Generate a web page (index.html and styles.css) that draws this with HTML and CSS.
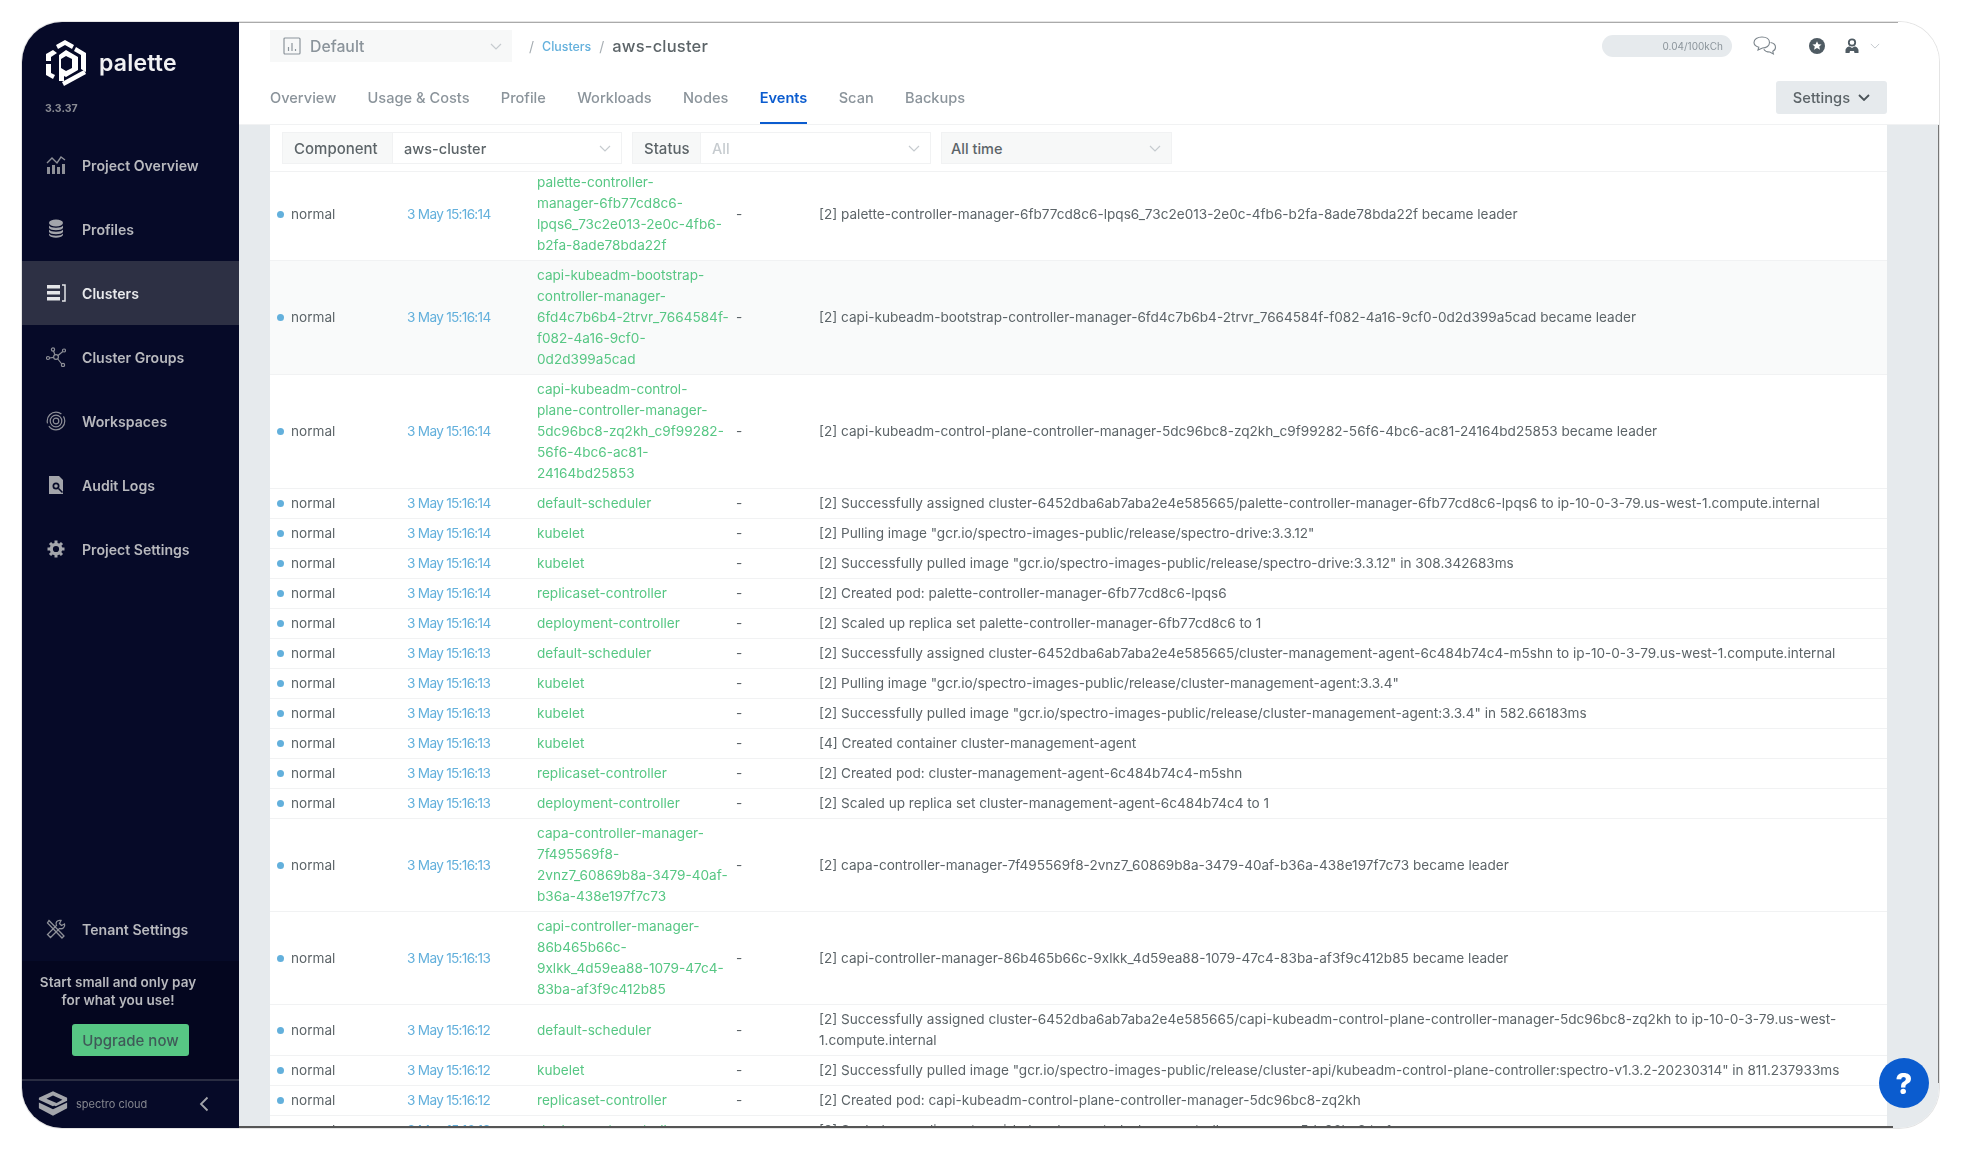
FILE: index.html
```html
<!DOCTYPE html>
<html lang="en">
<head>
<meta charset="utf-8">
<title>aws-cluster events</title>
<link rel="stylesheet" href="styles.css">
</head>
<body>
<div class="window">
  <aside class="sidebar">
    <div class="brand">
      <svg class="brand-mark" viewBox="0 0 42 48" fill="#fff"><path d="M20 1l9 5-2 4-7-4-7 4-2-4z"/><path d="M8 11l4 3-6 4v4H1v-7z"/><path d="M1 25h5v9l4 2-2 4-7-4z"/><path d="M31 8l10 6v19l-5-3V16l-7-4z"/><path d="M41 36l-22 12-2-4 22-12z" transform="translate(0 -1)"/><path fill-rule="evenodd" d="M21 11l12 7v13l-12 7-2-1v5h-5V16zm0 6l-5 3v9l5 3 6-3v-9z"/></svg>
      <span class="brand-name">palette</span>
    </div>
    <div class="version">3.3.37</div>
    <nav class="nav">
      <a class="nav-item"><svg class="nav-icon" viewBox="0 0 20 20" fill="#8e9098"><rect x="1" y="12" width="3" height="7"/><rect x="6" y="10" width="3" height="9"/><rect x="11" y="12" width="3" height="7"/><rect x="16" y="9" width="3" height="10"/><path d="M1 8l5-5 5 5 4-6 4 3" fill="none" stroke="#8e9098" stroke-width="1.4"/></svg>Project Overview</a>
      <a class="nav-item"><svg class="nav-icon" viewBox="0 0 20 20" fill="#a3a5ab"><ellipse cx="10" cy="4" rx="7" ry="3.4"/><path d="M3 6.500c1.500 3 12.500 3 14 0V9c-1.500 3-12.500 3-14 0z"/><path d="M3 10.500c1.500 3 12.500 3 14 0V13c-1.500 3-12.500 3-14 0z"/><path d="M3 14.500c1.500 3 12.500 3 14 0V16c-1.500 3.500-12.500 3.500-14 0z"/></svg>Profiles</a>
      <a class="nav-item active"><svg class="nav-icon" viewBox="0 0 20 20" fill="#e4e5e8"><rect x="1" y="2" width="13" height="3.500"/><rect x="1" y="8" width="13" height="3.500"/><rect x="1" y="14" width="13" height="3.500"/><path d="M16 2h3v16h-3" fill="none" stroke="#e4e5e8" stroke-width="1.500"/></svg>Clusters</a>
      <a class="nav-item"><svg class="nav-icon" viewBox="0 0 20 20" fill="none" stroke="#8e9098" stroke-width="1.200"><circle cx="10" cy="10" r="2.400"/><circle cx="7" cy="2.500" r="1.600"/><circle cx="18" cy="3.500" r="1.500"/><circle cx="2" cy="11" r="1.500"/><circle cx="17" cy="18" r="1.600"/><path d="M7.500 4l1.500 4M16.800 4.500L12 8.500M3.500 11l4-.6M15.800 17l-4-5"/></svg>Cluster Groups</a>
      <a class="nav-item"><svg class="nav-icon" viewBox="0 0 20 20" fill="none" stroke="#8e9098" stroke-width="1.200"><circle cx="10" cy="10" r="8.800" stroke-dasharray="22 3"/><circle cx="10" cy="10" r="5.800"/><circle cx="10" cy="10" r="2.800"/></svg>Workspaces</a>
      <a class="nav-item"><svg class="nav-icon" viewBox="0 0 20 20"><path fill="#a3a5ab" d="M3 1h10l4 4v14H3z"/><circle cx="10" cy="11" r="3.500" fill="#060a28"/><circle cx="10" cy="11" r="1.800" fill="#a3a5ab"/><path d="M12.500 13.500l4 4" stroke="#060a28" stroke-width="1.600"/></svg>Audit Logs</a>
      <a class="nav-item"><svg class="nav-icon" viewBox="0 0 20 20"><circle cx="10" cy="10" r="4.700" fill="none" stroke="#a3a5ab" stroke-width="3.200"/><path d="M10 1.500v17M1.500 10h17M4 4l12 12M16 4L4 16" stroke="#a3a5ab" stroke-width="3" stroke-dasharray="3 11"/></svg>Project Settings</a>
    </nav>
    <a class="nav-item"><svg class="nav-icon" viewBox="0 0 20 20" fill="none" stroke="#8e9098" stroke-width="1.300"><path d="M3 1.500l15 15.500-2 2L1.500 4z"/><path d="M18.500 5l-3 1.500-2-2L15 1.500C11 .5 9 4 10.500 6.500L1.500 15.500l3 3 9-9c3 1 6-1.500 5-4.500z"/></svg>Tenant Settings</a>
    <div class="upsell">
      <p class="upsell-text">Start small and only pay<br>for what you use!</p>
      <button class="upgrade">Upgrade now</button>
    </div>
    <div class="side-foot">
      <svg class="spectro-mark" viewBox="0 0 34 28" fill="#a3a5ab"><path d="M17 1l15 7v3L20 17l-3-1.500L27 10 17 5.500 10 9l12 5-5 3L2 10V8z"/><path d="M2 13l15 7 15-7v6L17 27 2 19z"/></svg>
      <span class="spectro-name">spectro cloud</span>
      <svg class="collapse" viewBox="0 0 10 16" fill="none" stroke="#a3a5ab" stroke-width="1.800"><path d="M8.500 1.500L2 8l6.500 6.500"/></svg>
    </div>
  </aside>
  <main class="main">
    <header class="header">
      <div class="topbar">
        <div class="workspace">
          <svg class="ws-icon" viewBox="0 0 18 18" fill="none" stroke="#8b949b" stroke-width="1.200"><rect x="1" y="1" width="16" height="16" rx="1"/><path d="M5.500 10v4M9 6v8M12.500 12v2"/></svg>
          <span class="ws-name">Default</span>
          <svg class="chev ws-chev" viewBox="0 0 12 7"><path d="M1 1l5 5 5-5"/></svg>
        </div>
        <span class="crumb-sep first">/</span>
        <a class="crumb-link">Clusters</a>
        <span class="crumb-sep">/</span>
        <span class="crumb-current">aws-cluster</span>
        <div class="top-right">
          <div class="usage">0.04/100kCh</div>
          <svg class="chat" viewBox="0 0 24 20" fill="none" stroke="#7c858c" stroke-width="1.100"><path d="M9 1c4.500 0 7.500 2.300 7.500 5.500S13.500 12 9.500 12L5 14l.8-2.800C2.800 10.300 1 8.700 1 6.500 1 3.300 4.500 1 9 1z"/><path d="M17.500 6.500c3 .5 5 2.300 5 4.800 0 1.800-1 3.200-2.700 4l.6 2.700-3.600-2c-2.800 0-5-1-6-2.800"/></svg>
          <svg class="star" viewBox="0 0 16 16"><circle cx="8" cy="8" r="8" fill="#4f5b63"/><path fill="#fff" d="M8 3.200l1.400 3 3.200.3-2.400 2.100.8 3.200L8 10.100l-3 1.700.8-3.200-2.400-2.100 3.200-.3z"/></svg>
          <svg class="user" viewBox="0 0 16 16"><circle cx="8" cy="4.500" r="3.200" fill="none" stroke="#4f5b63" stroke-width="1.800"/><path fill="#4f5b63" d="M1.500 15v-2.500C1.500 10 4 8.500 5.500 8.500L8 10l2.500-1.500c1.500 0 4 1.500 4 4V15h-4l-.5-2H6l-.5 2z"/></svg>
          <svg class="chev user-chev" viewBox="0 0 12 7"><path d="M1 1l5 5 5-5"/></svg>
        </div>
      </div>
      <div class="tabbar">
        <nav class="tabs">
          <a class="tab">Overview</a>
          <a class="tab">Usage &amp; Costs</a>
          <a class="tab">Profile</a>
          <a class="tab">Workloads</a>
          <a class="tab">Nodes</a>
          <a class="tab current">Events</a>
          <a class="tab">Scan</a>
          <a class="tab">Backups</a>
        </nav>
        <button class="settings">Settings<svg class="settings-chev" viewBox="0 0 12 7"><path d="M1 1l5 5 5-5"/></svg></button>
      </div>
    </header>
    <section class="body">
      <div class="panel">
        <div class="filters">
          <div class="filter f-component"><span class="f-label">Component</span><span class="f-value">aws-cluster</span><svg class="chev" viewBox="0 0 12 7"><path d="M1 1l5 5 5-5"/></svg></div>
          <div class="filter f-status"><span class="f-label">Status</span><span class="f-value muted">All</span><svg class="chev" viewBox="0 0 12 7"><path d="M1 1l5 5 5-5"/></svg></div>
          <div class="filter f-time"><span class="f-value">All time</span><svg class="chev" viewBox="0 0 12 7"><path d="M1 1l5 5 5-5"/></svg></div>
        </div>
        <table class="events">
          <colgroup><col class="c-type"><col class="c-time"><col class="c-src"><col class="c-dash"><col></colgroup>
          <tbody>
            <tr class="first-row"><td><i class="dot"></i>normal</td><td class="time">3 May 15:16:14</td><td class="src">palette-controller-<br>manager-6fb77cd8c6-<br>lpqs6_73c2e013-2e0c-4fb6-<br>b2fa-8ade78bda22f</td><td>-</td><td>[2] palette-controller-manager-6fb77cd8c6-lpqs6_73c2e013-2e0c-4fb6-b2fa-8ade78bda22f became leader</td></tr>
            <tr class="hover"><td><i class="dot"></i>normal</td><td class="time">3 May 15:16:14</td><td class="src">capi-kubeadm-bootstrap-<br>controller-manager-<br>6fd4c7b6b4-2trvr_7664584f-<br>f082-4a16-9cf0-<br>0d2d399a5cad</td><td>-</td><td>[2] capi-kubeadm-bootstrap-controller-manager-6fd4c7b6b4-2trvr_7664584f-f082-4a16-9cf0-0d2d399a5cad became leader</td></tr>
            <tr><td><i class="dot"></i>normal</td><td class="time">3 May 15:16:14</td><td class="src">capi-kubeadm-control-<br>plane-controller-manager-<br>5dc96bc8-zq2kh_c9f99282-<br>56f6-4bc6-ac81-<br>24164bd25853</td><td>-</td><td>[2] capi-kubeadm-control-plane-controller-manager-5dc96bc8-zq2kh_c9f99282-56f6-4bc6-ac81-24164bd25853 became leader</td></tr>
            <tr><td><i class="dot"></i>normal</td><td class="time">3 May 15:16:14</td><td class="src">default-scheduler</td><td>-</td><td>[2] Successfully assigned cluster-6452dba6ab7aba2e4e585665/palette-controller-manager-6fb77cd8c6-lpqs6 to ip-10-0-3-79.us-west-1.compute.internal</td></tr>
            <tr><td><i class="dot"></i>normal</td><td class="time">3 May 15:16:14</td><td class="src">kubelet</td><td>-</td><td>[2] Pulling image "gcr.io/spectro-images-public/release/spectro-drive:3.3.12"</td></tr>
            <tr><td><i class="dot"></i>normal</td><td class="time">3 May 15:16:14</td><td class="src">kubelet</td><td>-</td><td>[2] Successfully pulled image "gcr.io/spectro-images-public/release/spectro-drive:3.3.12" in 308.342683ms</td></tr>
            <tr><td><i class="dot"></i>normal</td><td class="time">3 May 15:16:14</td><td class="src">replicaset-controller</td><td>-</td><td>[2] Created pod: palette-controller-manager-6fb77cd8c6-lpqs6</td></tr>
            <tr><td><i class="dot"></i>normal</td><td class="time">3 May 15:16:14</td><td class="src">deployment-controller</td><td>-</td><td>[2] Scaled up replica set palette-controller-manager-6fb77cd8c6 to 1</td></tr>
            <tr><td><i class="dot"></i>normal</td><td class="time">3 May 15:16:13</td><td class="src">default-scheduler</td><td>-</td><td>[2] Successfully assigned cluster-6452dba6ab7aba2e4e585665/cluster-management-agent-6c484b74c4-m5shn to ip-10-0-3-79.us-west-1.compute.internal</td></tr>
            <tr><td><i class="dot"></i>normal</td><td class="time">3 May 15:16:13</td><td class="src">kubelet</td><td>-</td><td>[2] Pulling image "gcr.io/spectro-images-public/release/cluster-management-agent:3.3.4"</td></tr>
            <tr><td><i class="dot"></i>normal</td><td class="time">3 May 15:16:13</td><td class="src">kubelet</td><td>-</td><td>[2] Successfully pulled image "gcr.io/spectro-images-public/release/cluster-management-agent:3.3.4" in 582.66183ms</td></tr>
            <tr><td><i class="dot"></i>normal</td><td class="time">3 May 15:16:13</td><td class="src">kubelet</td><td>-</td><td>[4] Created container cluster-management-agent</td></tr>
            <tr><td><i class="dot"></i>normal</td><td class="time">3 May 15:16:13</td><td class="src">replicaset-controller</td><td>-</td><td>[2] Created pod: cluster-management-agent-6c484b74c4-m5shn</td></tr>
            <tr><td><i class="dot"></i>normal</td><td class="time">3 May 15:16:13</td><td class="src">deployment-controller</td><td>-</td><td>[2] Scaled up replica set cluster-management-agent-6c484b74c4 to 1</td></tr>
            <tr><td><i class="dot"></i>normal</td><td class="time">3 May 15:16:13</td><td class="src">capa-controller-manager-<br>7f495569f8-<br>2vnz7_60869b8a-3479-40af-<br>b36a-438e197f7c73</td><td>-</td><td>[2] capa-controller-manager-7f495569f8-2vnz7_60869b8a-3479-40af-b36a-438e197f7c73 became leader</td></tr>
            <tr><td><i class="dot"></i>normal</td><td class="time">3 May 15:16:13</td><td class="src">capi-controller-manager-<br>86b465b66c-<br>9xlkk_4d59ea88-1079-47c4-<br>83ba-af3f9c412b85</td><td>-</td><td>[2] capi-controller-manager-86b465b66c-9xlkk_4d59ea88-1079-47c4-83ba-af3f9c412b85 became leader</td></tr>
            <tr><td><i class="dot"></i>normal</td><td class="time">3 May 15:16:12</td><td class="src">default-scheduler</td><td>-</td><td>[2] Successfully assigned cluster-6452dba6ab7aba2e4e585665/capi-kubeadm-control-plane-controller-manager-5dc96bc8-zq2kh to ip-10-0-3-79.us-west-<br>1.compute.internal</td></tr>
            <tr><td><i class="dot"></i>normal</td><td class="time">3 May 15:16:12</td><td class="src">kubelet</td><td>-</td><td>[2] Successfully pulled image "gcr.io/spectro-images-public/release/cluster-api/kubeadm-control-plane-controller:spectro-v1.3.2-20230314" in 811.237933ms</td></tr>
            <tr><td><i class="dot"></i>normal</td><td class="time">3 May 15:16:12</td><td class="src">replicaset-controller</td><td>-</td><td>[2] Created pod: capi-kubeadm-control-plane-controller-manager-5dc96bc8-zq2kh</td></tr>
            <tr><td><i class="dot"></i>normal</td><td class="time">3 May 15:16:12</td><td class="src">deployment-controller</td><td>-</td><td>[2] Scaled up replica set capi-kubeadm-control-plane-controller-manager-5dc96bc8 to 1</td></tr>
          </tbody>
        </table>
      </div>
      <button class="help">?</button>
    </section>
  </main>
</div>
</body>
</html>
```
FILE: styles.css
```css
* { box-sizing: border-box; }
html, body { margin: 0; height: 100%; background: #fff; }
body { font-family: Inter, "Open Sans", sans-serif; color: #5c6468; overflow: hidden; }
p { margin: 0; }
button { font-family: inherit; border: 0; padding: 0; }

.window {
  width: 1917px; height: 1106px; margin: 22px 0 0 22px;
  display: flex; overflow: hidden; position: relative;
  border-radius: 40px;
  box-shadow: 0 0 0 1px #e4e4e4;
  filter: blur(0.55px);
}

.sidebar { width: 217px; flex: none; background: #060a28; display: flex; flex-direction: column; color: #b5b6bb; }
.brand { display: flex; align-items: center; padding: 16px 0 0 23px; height: 65px; }
.brand-mark { width: 42px; height: 48px; }
.brand-name { margin: 0 0 0 12px; color: #f1f1f3; font: 600 23px Inter, sans-serif; letter-spacing: .2px; }
.version { padding: 15px 0 0 23px; height: 46px; font-size: 10.500px; font-weight: 700; color: #8a8c94; }
.nav { flex: 1; display: flex; flex-direction: column; }
.nav-item { height: 64px; flex: none; display: flex; align-items: center; padding-left: 24px; font-size: 14.100px; font-weight: 600; color: #b8b9be; }
.nav-item.active { background: #2d3044; color: #e8e9ec; }
.nav-icon { width: 20px; height: 20px; margin-right: 16px; flex: none; }
.upsell { height: 118px; flex: none; background: #04061f; display: flex; flex-direction: column; align-items: center; padding-top: 12px; }
.upsell-text { text-align: center; font-size: 13.500px; font-weight: 600; line-height: 18px; color: #b8b9be; padding-right: 25px; }
.upgrade { margin-top: 15px; width: 117px; height: 32px; border-radius: 3px; background: #57c784; color: #3f5a58; font-size: 15px; font-weight: 500; }
.side-foot { height: 49px; flex: none; border-top: 2px solid #2a2d42; display: flex; align-items: center; padding: 0 0 2px 15px; }
.spectro-mark { width: 32px; height: 27px; }
.spectro-name { margin-left: 7px; width: 76px; white-space: nowrap; font-size: 11px; color: #85878f; }
.collapse { width: 10px; height: 16px; margin-left: 47px; }

.main { flex: 1; min-width: 0; display: flex; flex-direction: column; position: relative; }
.main::before { content: ""; position: absolute; z-index: 2; top: 0; left: 0; right: 41px; height: 1px; background: #aaa; }
.main::after { content: ""; position: absolute; z-index: 2; bottom: 0; left: 0; right: 46px; height: 2px; background: #555; }
.header { height: 103px; flex: none; background: #fff; border-bottom: 1px solid #f1f2f3; padding: 0 52px 0 31px; }
.topbar { height: 44px; padding-top: 4px; display: flex; align-items: center; }
.workspace { width: 242px; height: 32px; background: #f7f8f8; display: flex; align-items: center; padding: 0 10px 0 13px; }
.ws-icon { width: 18px; height: 18px; }
.ws-name { margin-left: 9px; flex: 1; font-size: 15.800px; font-weight: 500; color: #8b949b; }
.chev { width: 12px; height: 7px; fill: none; stroke: #c6cbcf; stroke-width: 1.200; flex: none; }
.crumb-sep { color: #a6adb2; font-size: 14px; margin: 0 8px; }
.crumb-sep.first { margin-left: 17px; }
.crumb-link { color: #63b0dc; font-size: 12.400px; font-weight: 500; }
.crumb-current { color: #5c6468; font-size: 16.500px; font-weight: 500; letter-spacing: .2px; }
.top-right { margin-left: auto; display: flex; align-items: center; }
.usage { width: 130px; height: 22px; border-radius: 11px; background: #e6eaed; text-align: right; padding-right: 9px; line-height: 22px; font-size: 10px; color: #8b949b; }
.chat { width: 24px; height: 20px; margin-left: 21px; }
.star { width: 16px; height: 16px; margin-left: 32px; }
.user { width: 16px; height: 16px; margin-left: 19px; }
.user-chev { width: 10px; height: 6px; margin-left: 10px; margin-right: 7px; }
.tabbar { height: 58px; display: flex; justify-content: space-between; align-items: flex-start; padding-top: 14px; }
.tabs { display: flex; gap: 31.300px; }
.tab { display: block; height: 44px; padding-top: 9px; font-size: 14.600px; font-weight: 500; color: #8b949b; }
.tab.current { color: #0b5ccf; font-weight: 600; border-bottom: 2px solid #0b5ccf; }
.settings { width: 111px; height: 33px; margin-top: 1px; border-radius: 3px; background: #e6eaed; color: #5c6468; font-size: 14.700px; font-weight: 500; display: flex; align-items: center; justify-content: center; }
.settings-chev { width: 12px; height: 7px; margin-left: 8px; fill: none; stroke: #4a5358; stroke-width: 1.800; }

.body { flex: 1; min-height: 0; background: #e6eaed; padding: 0 52px 0 31px; position: relative; overflow: hidden; }
.body::after { content: ""; position: absolute; right: 0; top: -60px; bottom: 45px; width: 1px; background: #777; }
.panel { background: #fff; height: 100%; overflow: hidden; }
.filters { height: 47px; display: flex; align-items: center; gap: 10px; padding: 0 12px; border-bottom: 1px solid #f1f2f3; }
.filter { height: 32px; border: 1px solid #f1f2f3; display: flex; align-items: center; font-size: 14.500px; font-weight: 500; padding-right: 10px; }
.f-component { width: 340px; }
.f-status { width: 299px; }
.f-time { width: 231px; background: #f7f8f8; }
.f-label { background: #f7f8f8; height: 100%; display: flex; align-items: center; padding: 0 11px; border-right: 1px solid #f1f2f3; color: #5c6468; font-size: 15px; }
.f-component .f-label { width: 110px; }
.f-status .f-label { width: 68px; }
.f-value { flex: 1; padding-left: 11px; color: #5c6468; }
.f-time .f-value { padding-left: 9px; }
.f-value.muted { color: #c6cbcf; }

.events { width: 100%; border-collapse: collapse; table-layout: fixed; font-size: 13.600px; line-height: 21px; font-weight: 400; }
.c-type { width: 137px; }
.c-time { width: 130px; }
.c-src { width: 199px; }
.c-dash { width: 83px; }
.events td { padding: 4px 0; vertical-align: middle; border-bottom: 1px solid #f1f2f3; white-space: nowrap; color: #5c6468; }
.events td:first-child { padding-left: 7px; }
.first-row td { padding-top: 0; }
.hover td { background: #f9fafa; }
.dot { display: inline-block; width: 7px; height: 7px; border-radius: 50%; background: #63b0dc; margin-right: 7px; vertical-align: 1px; }
.events .time { color: #63b0dc; letter-spacing: -.7px; }
.events .src { color: #57c784; }

.help { position: absolute; right: 10px; bottom: 20px; width: 50px; height: 50px; border-radius: 50%; background: #0b5ccf; color: #fff; font-size: 29px; font-weight: 800; }
```
